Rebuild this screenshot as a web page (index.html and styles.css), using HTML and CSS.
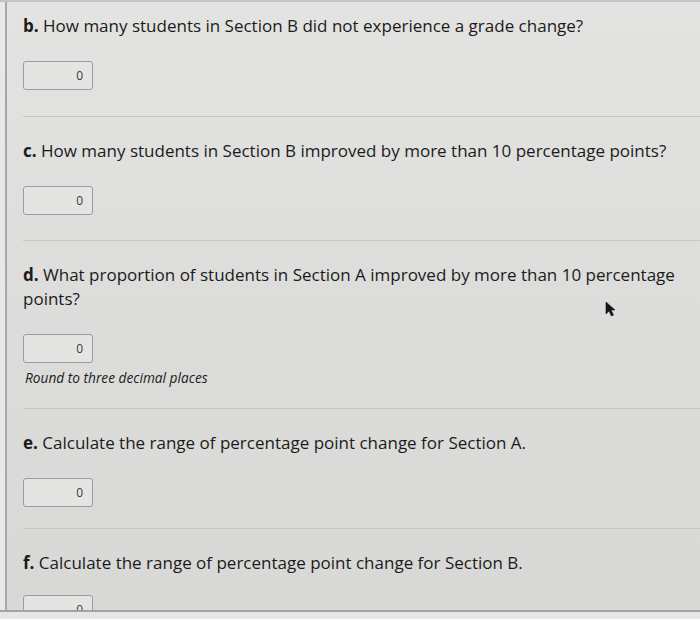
FILE: index.html
```html
<!DOCTYPE html>
<html lang="en">
<head>
  <meta charset="UTF-8" />
  <meta name="viewport" content="width=device-width, initial-scale=1.0" />
  <title>Grade Change Questions</title>
  <link rel="stylesheet" href="styles.css">
</head>

<body>
  <div class="frame">
    <div class="rail"></div>

    <div class="sheet">
      <!-- Question b -->
      <div class="question first">
        <p class="prompt"><strong>b.</strong> How many students in Section B did not experience a grade change?</p>
        <div class="answer">0</div>
      </div>

      <!-- Question c -->
      <div class="question">
        <p class="prompt"><strong>c.</strong> How many students in Section B improved by more than 10 percentage points?</p>
        <div class="answer">0</div>
      </div>

      <!-- Question d -->
      <div class="question with-hint">
        <p class="prompt"><strong>d.</strong> What proportion of students in Section A improved by more than 10 percentage points?</p>
        <div class="answer">0</div>
        <p class="hint">Round to three decimal places</p>
      </div>

      <!-- Question e -->
      <div class="question tight">
        <p class="prompt"><strong>e.</strong> Calculate the range of percentage point change for Section A.</p>
        <div class="answer">0</div>
      </div>

      <!-- Question f -->
      <div class="question last">
        <p class="prompt"><strong>f.</strong> Calculate the range of percentage point change for Section B.</p>
        <div class="answer">0</div>
      </div>
    </div>

    <!-- mouse pointer -->
    <svg class="pointer" width="12" height="16" viewBox="0 0 12 16">
      <path d="M1 1 L1 13 L4 10 L6.5 15 L8.5 14 L6 9 L10 9 Z" fill="#151515" stroke="#151515" stroke-width="0.6"/>
    </svg>
  </div>
  <div class="bottom"></div>
</body>
</html>
```

FILE: styles.css
```css
body {
  margin: 0;
  font-family: 'Open Sans', 'Noto Sans', sans-serif;
  color: #1b1b1b;
  background: #dcdcda;
}

.frame {
  position: relative;
  display: flex;
  height: 608px;
  overflow: hidden;
  border-top: 2px solid #c4c4c4;
  border-bottom: 2px solid #a3a3a3;
  background: linear-gradient(180deg, #e3e3e1 0%, #dcdcda 55%, #d8d8d6 100%);
}

.rail {
  width: 5px;
  flex-shrink: 0;
  background: #e8e8e8;
  border-right: 2px solid #a8a8a8;
}

.sheet {
  flex: 1;
  padding-left: 16px;
}

.question {
  padding: 22px 0 25px;
  border-bottom: 1px solid #c6c6c4;
}

.question.first {
  padding-top: 12px;
  padding-bottom: 26px;
}

.question.with-hint {
  padding-bottom: 21px;
}

.question.tight {
  padding-bottom: 21px;
}

.question.last .prompt {
  margin-bottom: 20px;
}

.prompt {
  margin: 0 4px 23px 0;
  font-size: 17px;
  line-height: 24px;
}

.prompt strong {
  font-weight: 700;
}

.answer {
  width: 59px;
  height: 27px;
  padding-right: 9px;
  border: 1.5px solid #9c9c9c;
  border-radius: 3px;
  background: #e4e4e2;
  font-size: 12px;
  line-height: 27px;
  text-align: right;
  color: #3a3a3a;
}

.hint {
  margin: 6px 0 0 2px;
  font-size: 13.7px;
  font-style: italic;
  line-height: 18px;
}

.pointer {
  position: absolute;
  left: 605px;
  top: 299px;
}

.bottom {
  height: 7px;
  background: #e6e6e6;
}
```
